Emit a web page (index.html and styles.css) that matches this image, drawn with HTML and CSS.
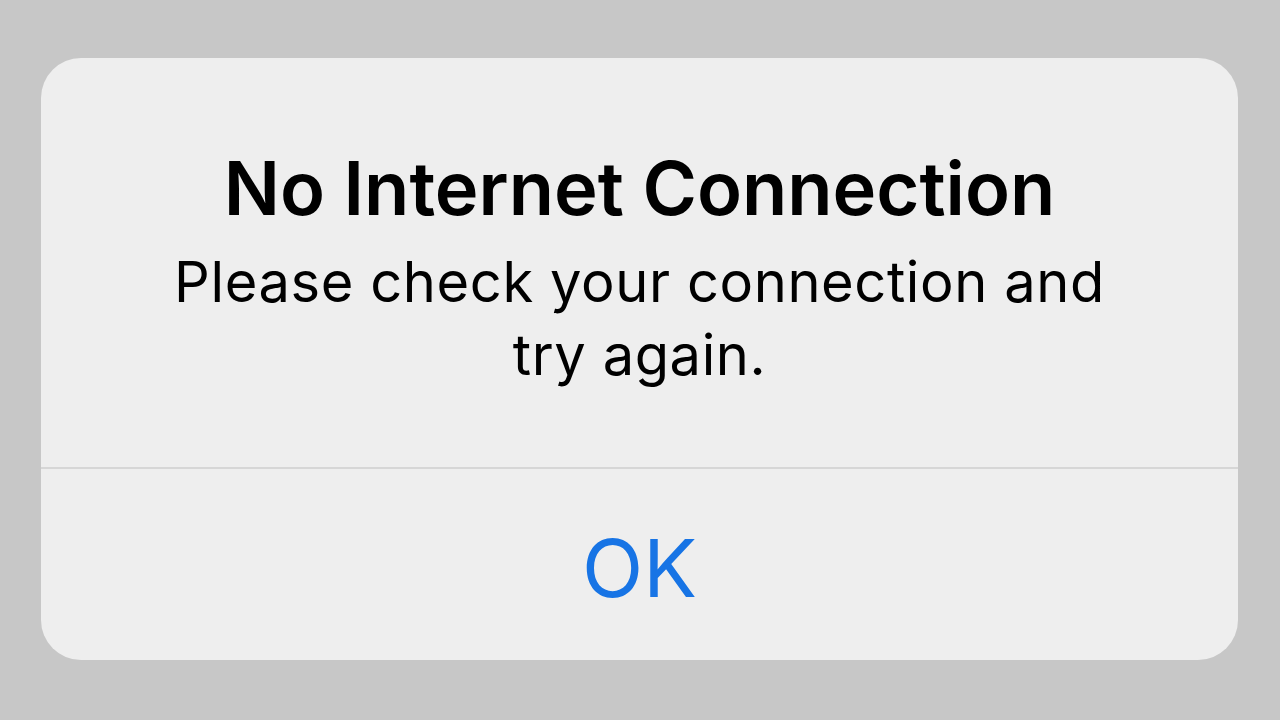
FILE: index.html
```html
<!DOCTYPE html>
<html lang="en">
<head>
<meta charset="utf-8">
<title>No Internet Connection</title>
<link rel="stylesheet" href="styles.css">
</head>
<body>
<div class="stage">
  <div class="alert" role="alertdialog">
    <div class="alert-content">
      <h1 class="alert-title">No Internet Connection</h1>
      <p class="alert-message">Please check your connection and<br>try again.</p>
    </div>
    <div class="alert-sep"></div>
    <div class="alert-actions">
      <button class="alert-btn">OK</button>
    </div>
  </div>
</div>
</body>
</html>
```
FILE: styles.css
```css
html, body {
  margin: 0;
  padding: 0;
  background: #c7c7c7;
}
.stage {
  width: 1280px;
  height: 720px;
  box-sizing: border-box;
  padding: 58px 42px 0 41px;
}
.alert {
  width: 1197px;
  height: 602px;
  background: #eeeeee;
  border-radius: 40px;
  display: flex;
  flex-direction: column;
  font-family: Inter, "Noto Sans", sans-serif;
  color: #000;
}
.alert-content {
  height: 409px;
  box-sizing: border-box;
  padding-top: 85px;
  text-align: center;
}
.alert-title {
  margin: 0;
  font-size: 74px;
  font-weight: 600;
  line-height: 90px;
}
.alert-message {
  margin: 13px 0 0;
  font-size: 56px;
  font-weight: 400;
  letter-spacing: 0.6px;
  line-height: 73px;
}
.alert-sep {
  height: 2px;
  background: #d6d6d6;
}
.alert-actions {
  flex: 1;
  display: flex;
  align-items: center;
  justify-content: center;
  padding-top: 7px;
}
.alert-btn {
  border: 0;
  background: none;
  padding: 0;
  font-family: Inter, "Noto Sans", sans-serif;
  font-size: 80px;
  font-weight: 400;
  line-height: 1;
  color: #1774e5;
}
```
